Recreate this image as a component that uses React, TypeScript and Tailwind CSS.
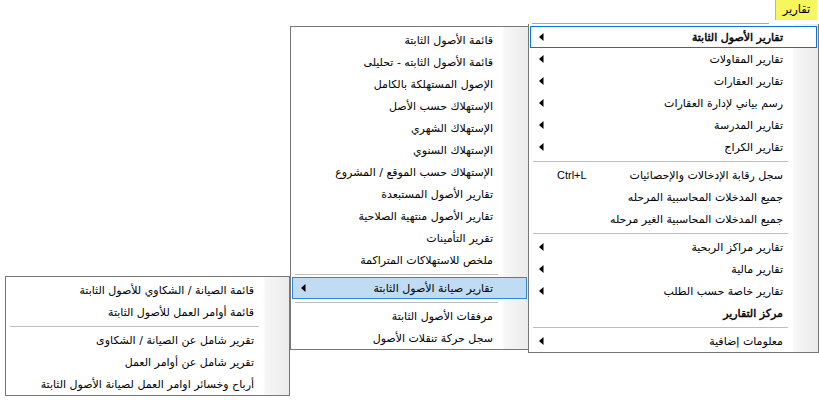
import React from "react";

type Item =
  | { sep: true }
  | {
      sep?: false;
      label: string;
      arrow?: boolean;
      shortcut?: string;
      bold?: boolean;
      state?: "focus" | "hover";
    };

const Arrow = () => (
  <svg width="5" height="8" viewBox="0 0 5 8" className="block">
    <polygon points="4.5,0 4.5,8 0,4" fill="#000" />
  </svg>
);

function Menu({ items, className }: { items: Item[]; className: string }) {
  return (
    <div
      dir="rtl"
      className={
        "absolute flex flex-col border border-[#767676] bg-[linear-gradient(to_left,#ebebeb_0px,#f7f7f7_24px,#ffffff_26px)] pt-[2px] " +
        className
      }
    >
      {items.map((it, i) =>
        it.sep ? (
          <div key={i} className="flex h-[6px] items-center">
            <div className="mr-[30px] ml-[4px] h-px flex-1 bg-[#bdbdbd]" />
          </div>
        ) : (
          <div key={i} className="px-[1px]">
            <div
              className={
                "flex h-[22px] items-center border pr-[33px] pl-[8px] " +
                (it.state === "focus"
                  ? "border-[#0a74d6] bg-white"
                  : it.state === "hover"
                  ? "border-[#2f86d8] bg-[#c0dcf3]"
                  : "border-transparent")
              }
            >
              <span
                className={
                  "whitespace-nowrap text-[11px] leading-none text-black " +
                  (it.bold ? "[-webkit-text-stroke:0.45px_#000]" : "")
                }
              >
                {it.label}
              </span>
              <div className="flex-1" />
              {it.arrow && <Arrow />}
              {it.shortcut && (
                <span
                  dir="ltr"
                  className="pl-[18px] text-[11px] leading-none text-black"
                  style={{ fontFamily: '"Liberation Sans", Arial, sans-serif' }}
                >
                  {it.shortcut}
                </span>
              )}
            </div>
          </div>
        )
      )}
    </div>
  );
}

const mainItems: Item[] = [
  { label: "تقارير الأصول الثابتة", arrow: true, bold: true, state: "focus" },
  { label: "تقارير المقاولات", arrow: true },
  { label: "تقارير العقارات", arrow: true },
  { label: "رسم بياني لإدارة العقارات", arrow: true },
  { label: "تقارير المدرسة", arrow: true },
  { label: "تقارير الكراج", arrow: true },
  { sep: true },
  { label: "سجل رقابة الإدخالات والإحصائيات", shortcut: "Ctrl+L" },
  { label: "جميع المدخلات المحاسبية المرحله" },
  { label: "جميع المدخلات المحاسبية الغير مرحله" },
  { sep: true },
  { label: "تقارير مراكز الربحية", arrow: true },
  { label: "تقارير مالية", arrow: true },
  { label: "تقارير خاصة حسب الطلب", arrow: true },
  { label: "مركز التقارير", bold: true },
  { sep: true },
  { label: "معلومات إضافية", arrow: true },
];

const subItems: Item[] = [
  { label: "قائمة الأصول الثابتة" },
  { label: "قائمة الأصول الثابته - تحليلى" },
  { label: "الإصول المستهلكة بالكامل" },
  { label: "الإستهلاك حسب الأصل" },
  { label: "الإستهلاك الشهري" },
  { label: "الإستهلاك السنوي" },
  { label: "الإستهلاك حسب الموقع / المشروع" },
  { label: "تقارير الأصول المستبعدة" },
  { label: "تقارير الأصول منتهية الصلاحية" },
  { label: "تقرير التأمينات" },
  { label: "ملخص للاستهلاكات المتراكمة" },
  { sep: true },
  { label: "تقارير صيانة الأصول الثابتة", arrow: true, state: "hover" },
  { sep: true },
  { label: "مرفقات الأصول الثابتة" },
  { label: "سجل حركة تنقلات الأصول" },
];

const thirdItems: Item[] = [
  { label: "قائمة الصيانة / الشكاوي للأصول الثابتة" },
  { label: "قائمة أوامر العمل للأصول الثابتة" },
  { sep: true },
  { label: "تقرير شامل عن الصيانة / الشكاوى" },
  { label: "تقرير شامل عن أوامر العمل" },
  { label: "أرباح وخسائر اوامر العمل لصيانة الأصول الثابتة" },
];

export default function App() {
  return (
    <div
      className="relative h-[400px] w-[819px] overflow-hidden bg-white"
      style={{ fontFamily: 'Tahoma, "DejaVu Sans", sans-serif' }}
    >
      <div
        dir="rtl"
        className="absolute left-[775px] top-0 flex h-[20px] w-[42px] items-center justify-center border-l border-[#b8b8a0] bg-[#f7f65c] text-[11.5px] leading-none text-black"
      >
        تقارير
      </div>
      <div className="absolute left-[532px] top-[23px] h-px w-[237px] bg-[#a8a8a8]" />
      <Menu items={mainItems} className="left-[528px] top-[24px] w-[291px] border-t-0" />
      <Menu items={subItems} className="left-[290px] top-[26px] w-[239px]" />
      <Menu items={thirdItems} className="left-[5px] top-[276px] w-[285px]" />
    </div>
  );
}
